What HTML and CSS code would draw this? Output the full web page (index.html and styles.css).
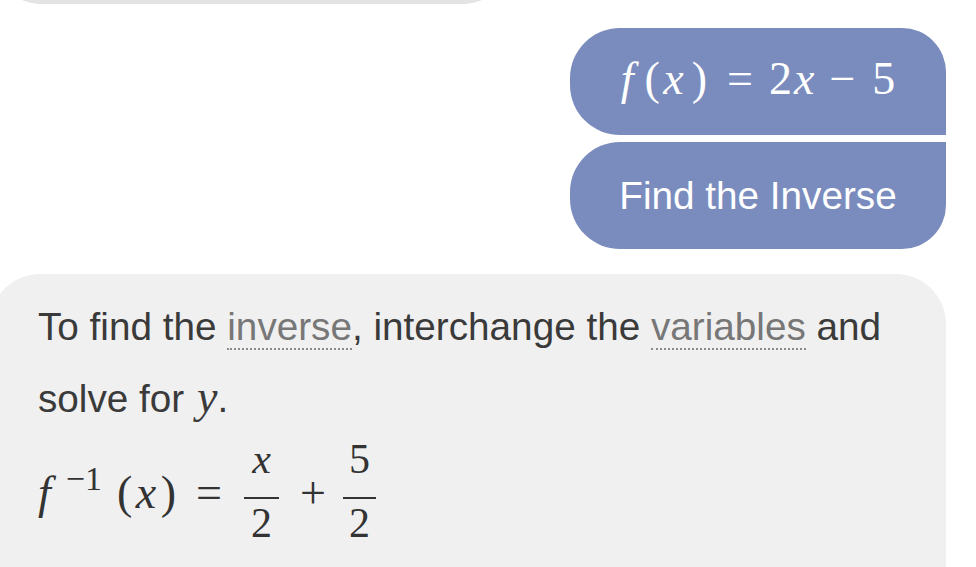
FILE: index.html
```html
<!DOCTYPE html>
<html lang="en">
<head>
<meta charset="utf-8">
<title>Find the Inverse</title>
<link rel="stylesheet" href="styles.css">
</head>
<body>
<div class="chat">
  <div class="bubble-prev"></div>
  <div class="user user-first"><span class="math"><span class="mi mf">f</span><span class="mopen">(</span><span class="mi mx">x</span><span class="mclose">)</span><span class="mrel">=</span><span class="mnum">2</span><span class="mi mx">x</span><span class="mbin">−</span><span class="mnum">5</span></span></div>
  <div class="user user-last">Find the Inverse</div>
  <div class="bot">
    <p class="para">To find the <span class="term">inverse</span>, interchange the <span class="term">variables</span> and<br>solve for <span class="mi my">y</span>.</p>
    <div class="math-display"><span class="mi mf mf-sup">f</span><span class="msup">−1</span><span class="mopen">(</span><span class="mi mx">x</span><span class="mclose mclose-tight">)</span><span class="mrel">=</span><span class="frac frac-wide"><span class="num mi">x</span><span class="bar"></span><span class="den">2</span></span><span class="mbin">+</span><span class="frac"><span class="num">5</span><span class="bar"></span><span class="den">2</span></span></div>
  </div>
</div>
</body>
</html>
```
FILE: styles.css
```css
html, body {
  margin: 0;
  padding: 0;
  background: #ffffff;
  overflow: hidden;
}

body {
  font-family: "Liberation Sans", Arial, sans-serif;
  color: #3a3a3a;
}

.chat {
  display: flex;
  flex-direction: column;
  align-items: flex-end;
  padding-right: 30px;
}

.bubble-prev {
  align-self: flex-start;
  width: 520px;
  height: 60px;
  margin-top: -56px;
  margin-left: -8px;
  background: #e3e3e3;
  border-radius: 0 0 50px 50px;
}

.user {
  width: 376px;
  height: 107px;
  box-sizing: border-box;
  background: #7a8cbe;
  color: #ffffff;
  display: flex;
  align-items: center;
  justify-content: center;
  font-size: 38.7px;
}

.user-first {
  margin-top: 24px;
  border-radius: 50px 44px 0 50px;
  padding-bottom: 6px;
}

.user-last {
  margin-top: 7px;
  border-radius: 50px 0 44px 50px;
}

.math,
.math-display {
  font-family: "Liberation Serif", "Times New Roman", serif;
  font-size: 46px;
  white-space: nowrap;
}

.mi {
  font-style: italic;
}

.mf {
  margin-right: 11px;
}

.mf-sup {
  margin-right: 15px;
}

.mopen {
  margin-right: 3.5px;
}

.mclose {
  margin-left: 8px;
}

.mclose-tight {
  margin-left: 4.5px;
}

.mrel {
  margin: 0 16px 0 20px;
}

.mbin {
  margin: 0 17px 0 15px;
}

.mnum + .mx {
  margin-left: 2px;
}

.bot {
  align-self: stretch;
  margin-top: 25px;
  margin-left: -10px;
  margin-right: 0;
  padding: 18px 40px 80px 48px;
  background: #f0f0f0;
  border-radius: 50px 50px 0 0;
}

.para {
  margin: 0;
  font-size: 38.7px;
  line-height: 70px;
  color: #3a3a3a;
}

.term {
  color: #777777;
  border-bottom: 2px dotted #8c8c8c;
}

.my {
  font-family: "Liberation Serif", "Times New Roman", serif;
  font-size: 46px;
  margin-left: 2px;
}

.math-display {
  margin-top: 4px;
  line-height: 46px;
  color: #333333;
}

.msup {
  font-size: 34px;
  vertical-align: 18px;
  margin-right: 15px;
}

.frac {
  display: inline-flex;
  flex-direction: column;
  align-items: center;
  vertical-align: 35px;
  margin: 0 6px;
  font-size: 42px;
}

.mrel + .frac {
  margin-left: 6px;
}

.mbin + .frac {
  margin-left: 0;
}

.num,
.den {
  line-height: 42px;
  padding: 0 6px;
}

.num {
  padding-bottom: 17px;
}

.bar {
  align-self: stretch;
  height: 2px;
  background: #333333;
}

.den {
  margin-top: 3px;
}

.frac-wide .num,
.frac-wide .den {
  padding-left: 7px;
  padding-right: 7px;
}
```
